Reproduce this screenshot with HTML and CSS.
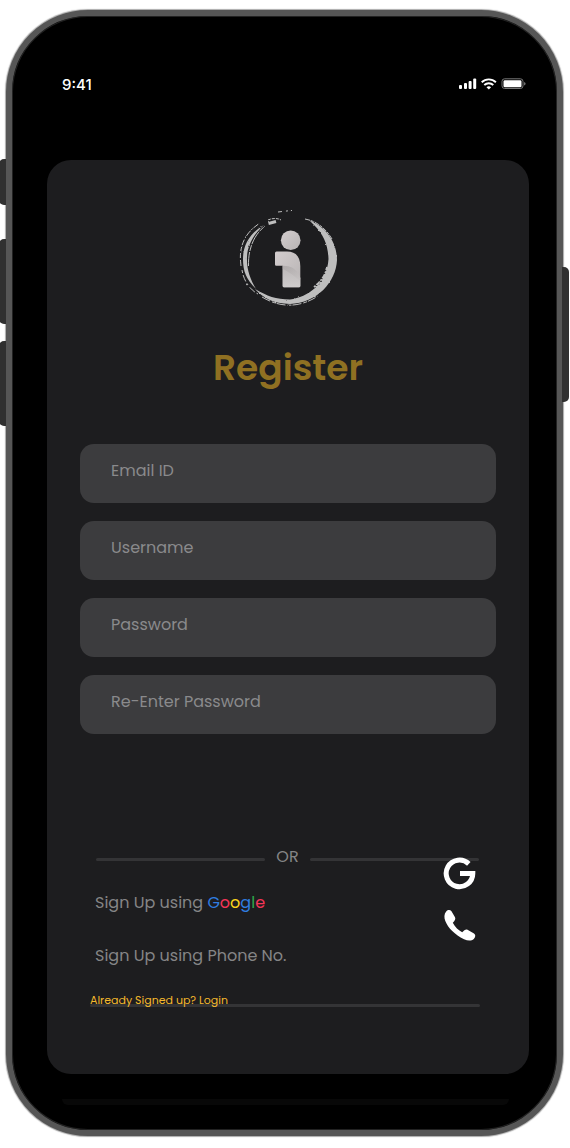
FILE: index.html
```html
<!DOCTYPE html>
<html lang="en">
<head>
<meta charset="utf-8">
<meta name="viewport" content="width=device-width, initial-scale=1">
<title>Register</title>
<link rel="stylesheet" href="styles.css">
</head>
<body>
<div class="phone">
  <span class="key key-mute"></span>
  <span class="key key-up"></span>
  <span class="key key-down"></span>
  <span class="key key-power"></span>

  <div class="status">
    <time class="clock">9:41</time>
    <svg class="indicators" viewBox="0 0 68 12" aria-hidden="true">
      <g fill="#fff">
        <rect x="0" y="7" width="3" height="4" rx="1"/>
        <rect x="5" y="5" width="3" height="6" rx="1"/>
        <rect x="9.600" y="3" width="3" height="8" rx="1"/>
        <rect x="14.200" y="0.500" width="3" height="10.500" rx="1"/>
      </g>
      <g fill="none" stroke="#fff" stroke-width="1.900">
        <path d="M22.700 4.300a10.200 10.200 0 0 1 14.200 0"/>
        <path d="M25.300 7a6.500 6.500 0 0 1 9 0"/>
      </g>
      <path d="M27.500 9.200a3.400 3.400 0 0 1 4.600 0L29.800 11.500z" fill="#fff"/>
      <rect x="43" y="0.800" width="21" height="9.700" rx="2.600" fill="none" stroke="#777"/>
      <rect x="44.500" y="2.200" width="18" height="7" rx="1.300" fill="#fff"/>
      <path d="M65.200 4v3.600c1.800-.8 1.800-2.800 0-3.600z" fill="#888"/>
    </svg>
  </div>

  <main class="card">
    <svg class="logo" viewBox="0 0 100 100" role="img" aria-label="i logo">
      <defs>
        <linearGradient id="body" x1="0" y1="0" x2="1" y2="1">
          <stop offset="0" stop-color="#d3cdce"/>
          <stop offset="1" stop-color="#b7b3b3"/>
        </linearGradient>
        <linearGradient id="fold" x1="0" y1="0" x2="1" y2="1">
          <stop offset="0" stop-color="#a39e9f"/>
          <stop offset="1" stop-color="#c4c0c0"/>
        </linearGradient>
        <linearGradient id="leg" x1="0" y1="0" x2="0" y2="1">
          <stop offset="0" stop-color="#bbb7b7"/>
          <stop offset="1" stop-color="#cfcccc"/>
        </linearGradient>
        <filter id="brush" x="-5%" y="-5%" width="110%" height="110%">
          <feTurbulence type="fractalNoise" baseFrequency="0.2" numOctaves="2" seed="4"/>
          <feDisplacementMap in="SourceGraphic" scale="2" xChannelSelector="R" yChannelSelector="G"/>
        </filter>
      </defs>
      <g filter="url(#brush)">
        <path fill="#bebebe" d="M71 11C86 17 99 31 99 51C98 73 79 94 52 95C35 94.500 25 89 17 80C29 87 38 90.500 52 90.500C70 88 89 75 90.500 50C90 35 85 25 76 16z"/>
        <path fill="#bebebe" d="M26 16C12 24 5 36 5 50C5 62 8 70 18 80C12 70 8.500 60 9 48C9.500 36 16 25 26 16z"/>
        <g fill="none" stroke="#bebebe">
          <path d="M3 57C0 36 8 23 22 14" stroke-width="1" stroke-dasharray="6 2 12 1"/>
          <path d="M10.500 57C10 38 17 25 27 17" stroke-width="1" stroke-dasharray="14 1 6 1"/>
          <path d="M4 61C6 74 14 82 20 85" stroke-width="1" stroke-dasharray="3 2 7 2"/>
          <path d="M24 88C44 100 63 98 80 87" stroke-width="1" stroke-dasharray="9 2 4 1"/>
          <path d="M67 10C79 12 88 20 94 30" stroke-width="1" stroke-dasharray="5 1 3 1"/>
          <path d="M76 78C84 72 88 65 89 58" stroke-width="2" stroke-dasharray="2 1 5 1"/>
          <path d="M30.500 14.500L38 12.500" stroke-width="3"/>
          <path d="M30 11C34 9 40 9 43 11" stroke-width="1" stroke-dasharray="3 1"/>
          <path d="M40 3L53 1.500" stroke-width="1" stroke-dasharray="4 4 2 2"/>
        </g>
      </g>
      <circle cx="52.700" cy="31.300" r="9.800" fill="url(#body)"/>
      <path d="M38.500 42.500H49C58 42.500 62.300 48 62.300 57V77Q62.300 78.300 61 78.300H46Q44.700 78.300 44.700 77V56.800H38.300Q37 56.800 37 55.500V44Q37 42.500 38.500 42.500z" fill="url(#body)"/>
      <path d="M44.700 56.800C54 57 60 61 62.300 69V77Q62.300 78.300 61 78.300H46Q44.700 78.300 44.700 77z" fill="url(#leg)"/>
      <path d="M44.700 56.800C54 57 60 61 62.300 69C62.300 75 58 66 44.700 60z" fill="url(#fold)" opacity="0.500"/>
    </svg>

    <h1 class="title">Register</h1>

    <form class="fields">
      <input class="field" type="email" placeholder="Email ID" aria-label="Email ID">
      <input class="field" type="text" placeholder="Username" aria-label="Username">
      <input class="field" type="password" placeholder="Password" aria-label="Password">
      <input class="field" type="password" placeholder="Re-Enter Password" aria-label="Re-Enter Password">
    </form>

    <div class="divider"><span class="rule"></span><span class="or">OR</span><span class="rule"></span></div>

    <div class="providers">
      <div class="choices">
        <button class="choice" type="button">Sign Up using <span class="blue">G</span><span class="red">o</span><span class="yellow">o</span><span class="blue">g</span><span class="green">l</span><span class="red">e</span></button>
        <button class="choice" type="button">Sign Up using Phone No.</button>
      </div>
      <div class="icons">
        <button class="icon" type="button" aria-label="Google">
          <svg viewBox="0 0 33 33"><path d="M25.800 6.900A13.300 13.300 0 1 0 29.800 16.600H17" fill="none" stroke="#fff" stroke-width="5"/></svg>
        </button>
        <button class="icon" type="button" aria-label="Phone">
          <svg viewBox="0 0 33 33"><path d="M3.200 2.500C4.800.8 7 .5 8.500 2.300L12 8.200C12.800 10 12 11.500 9.800 13.800C12 18 15.500 21.500 19.200 23.300C21 21.500 22.800 20 24.500 20.800L31 24.600C33 26 32.500 28.300 30.800 29.900C28.500 32 25 32 21 30.200C12 25.800 5 19 2.300 12C1 8.500 1 5 3.200 2.500z" fill="#fff"/></svg>
        </button>
      </div>
    </div>

    <div class="signin">
      <a class="login" href="#login">Already Signed up? Login</a>
      <span class="rule"></span>
    </div>
  </main>
  <div class="edge"></div>
</div>
</body>
</html>
```
FILE: styles.css
```css
* {
  box-sizing: border-box;
}

body {
  margin: 0;
  padding: 10px 7px 12px 6px;
  background: #fff;
  font-family: Poppins, Inter, "Open Sans", sans-serif;
  font-size: 16px;
  color: #858586;
}

button,
input {
  font: inherit;
  color: inherit;
}

.phone {
  position: relative;
  display: flex;
  flex-direction: column;
  padding: 0 28px 25px 35px;
  border: 6px solid #565656;
  border-radius: 82px;
  background: #000;
  box-shadow: inset 0 0 0 1px #222, 0 0 1px 1px #aaa;
}

.key {
  position: absolute;
  left: -13px;
  width: 7px;
  background: #303030;
  border-radius: 5px 0 0 5px;
}

.key-mute {
  top: 143px;
  height: 46px;
}

.key-up {
  top: 223px;
  height: 85px;
}

.key-down {
  top: 325px;
  height: 85px;
}

.key-power {
  top: 251px;
  left: auto;
  right: -12px;
  height: 135px;
  border-radius: 0 5px 5px 0;
}

.status {
  display: flex;
  justify-content: space-between;
  padding: 59px 2px 65px 15px;
}

.clock {
  color: #fff;
  font-family: Inter, sans-serif;
  font-size: 15px;
  font-weight: 500;
  line-height: 20px;
}

.indicators {
  width: 68px;
  height: 12px;
  margin-top: 3px;
}

.card {
  padding: 49px 33px 67px;
  border-radius: 24px;
  background: #1d1d1f;
}

.logo {
  display: block;
  width: 100px;
  height: 100px;
  margin: 0 auto;
}

.title {
  margin: 37px 0 54px;
  text-align: center;
  font-size: 36px;
  font-weight: 600;
  line-height: 44px;
  color: #8f7022;
}

.fields {
  display: grid;
  gap: 18px;
}

.field {
  width: 100%;
  height: 59px;
  padding: 0 31px 6px;
  border: 0;
  border-radius: 14px;
  background: #3c3c3e;
}

.field::placeholder {
  color: #8a8a8c;
  opacity: 1;
}

.divider {
  display: flex;
  align-items: center;
  gap: 11px;
  margin: 111px 17px 0 16px;
}

.rule {
  display: block;
  flex: 1;
  height: 3px;
  border-radius: 2px;
  background: #343436;
}

.or {
  padding-bottom: 4px;
  line-height: 24px;
}

.providers {
  display: flex;
  justify-content: space-between;
  margin: 0 20px 0 15px;
}

.choices {
  display: grid;
  justify-items: start;
  gap: 29px;
  padding-top: 18px;
}

.choice,
.icon {
  padding: 0;
  border: 0;
  background: none;
  line-height: 24px;
}

.icons {
  display: grid;
  align-content: start;
  gap: 19px;
  margin-top: -16px;
}

.icon svg {
  display: block;
  width: 33px;
  height: 33px;
}

.blue {
  color: #2f7de1;
}

.red {
  color: #f53558;
}

.yellow {
  color: #fbd51c;
}

.green {
  color: #2fa84a;
}

.signin {
  margin: 24px 16px 0 10px;
}

.login {
  display: block;
  width: fit-content;
  font-size: 11px;
  line-height: 16px;
  color: #f5b92c;
  text-decoration: none;
}

.signin .rule {
  margin-top: -4px;
}

.edge {
  height: 6px;
  margin: 25px 20px 0 15px;
  border-radius: 0 0 24px 24px;
  background: #080808;
}
```
